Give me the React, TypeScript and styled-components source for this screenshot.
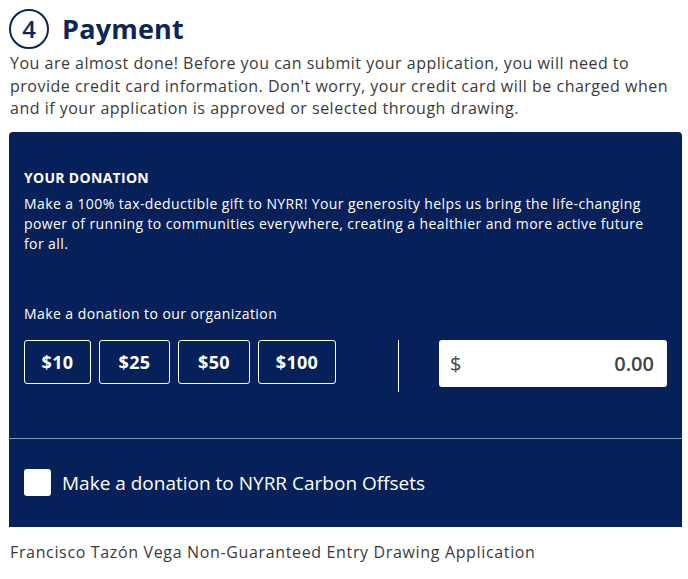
import { createGlobalStyle, styled } from 'styled-components';

const amounts = [
  { label: '$10', width: 67 },
  { label: '$25', width: 71 },
  { label: '$50', width: 72 },
  { label: '$100', width: 78 },
];

const GlobalStyle = createGlobalStyle`
  body {
    margin: 0;
    background: #ffffff;
    font-family: 'Open Sans', 'Liberation Sans', sans-serif;
  }
`;

const App = () => {
  return (
    <>
      <GlobalStyle />
      <StPage>
        <StHeader>
          <StStep>4</StStep>
          <StTitle>Payment</StTitle>
        </StHeader>
        <StIntro>
          You are almost done! Before you can submit your application, you will need to
          provide credit card information. Don't worry, your credit card will be charged when
          and if your application is approved or selected through drawing.
        </StIntro>

        <StPanel>
          <StDonation>
            <StLabel>YOUR DONATION</StLabel>
            <StDesc>
              Make a 100% tax-deductible gift to NYRR! Your generosity helps us bring the
              life-changing power of running to communities everywhere, creating a healthier
              and more active future for all.
            </StDesc>
            <StPrompt>Make a donation to our organization</StPrompt>
            <StAmountRow>
              <StAmounts>
                {amounts.map(({ label, width }) => (
                  <StAmountBtn key={label} type="button" $width={width}>
                    {label}
                  </StAmountBtn>
                ))}
              </StAmounts>
              <StDivider />
              <StInput>
                <span>$</span>
                <span>0.00</span>
              </StInput>
            </StAmountRow>
          </StDonation>
          <StOffset>
            <StCheck />
            <StOffsetText>Make a donation to NYRR Carbon Offsets</StOffsetText>
          </StOffset>
        </StPanel>

        <StFooter>Francisco Tazón Vega Non-Guaranteed Entry Drawing Application</StFooter>
      </StPage>
    </>
  );
};

export default App;

const StPage = styled.main`
  display: flex;
  flex-direction: column;
  padding: 8px 6px 0 9px;
`;

const StHeader = styled.div`
  display: flex;
  align-items: center;
  gap: 13px;
`;

const StStep = styled.div`
  display: flex;
  align-items: center;
  justify-content: center;

  width: 36px;
  height: 36px;

  border: 2.5px solid #0b2559;
  border-radius: 50%;
  color: #0b2559;
  font-size: 24px;
  font-weight: 600;
`;

const StTitle = styled.h1`
  margin: 0;

  color: #0b2559;
  font-size: 27px;
  font-weight: 700;
  line-height: 41px;
  letter-spacing: 0.2px;
`;

const StIntro = styled.p`
  margin: 3px 0 0 1px;

  color: #3a3a3a;
  font-size: 16px;
  line-height: 22.5px;
  letter-spacing: 0.5px;
`;

const StPanel = styled.section`
  margin-top: 12px;

  border-radius: 4px 4px 0 0;
  background: #06215a;
  color: #ffffff;
`;

const StDonation = styled.div`
  padding: 36px 15px 46px;

  border-bottom: 1px solid #8a97b3;
`;

const StLabel = styled.h2`
  margin: 0;

  font-size: 14px;
  font-weight: 700;
  line-height: 20px;
  letter-spacing: 0.3px;
`;

const StDesc = styled.p`
  margin: 6px 0 0;

  font-size: 14px;
  line-height: 20px;
  letter-spacing: 0.4px;
`;

const StPrompt = styled.p`
  margin: 50px 0 0;

  font-size: 14px;
  line-height: 20px;
  letter-spacing: 0.43px;
`;

const StAmountRow = styled.div`
  display: flex;
  align-items: flex-start;

  margin-top: 16px;
`;

const StAmounts = styled.div`
  display: flex;
  gap: 8px;
`;

const StAmountBtn = styled.button<{ $width: number }>`
  width: ${({ $width }) => $width}px;
  height: 44px;
  padding: 0;

  border: 1px solid #ffffff;
  border-radius: 3px;
  background: transparent;
  color: #ffffff;
  font-family: inherit;
  font-size: 18px;
  font-weight: 700;
  letter-spacing: 0.3px;
`;

const StDivider = styled.div`
  width: 1px;
  height: 52px;
  margin: 0 40px 0 62px;

  background: #ffffff;
`;

const StInput = styled.div`
  display: flex;
  align-items: center;
  justify-content: space-between;

  width: 228px;
  height: 47px;
  padding: 0 13px 0 11px;
  box-sizing: border-box;

  border-radius: 3px;
  background: #ffffff;
  color: #444444;
  font-size: 20px;

  & > span:last-child {
    font-weight: 600;
  }
`;

const StOffset = styled.div`
  display: flex;
  align-items: center;
  gap: 11px;

  height: 88px;
  padding: 0 15px;
`;

const StCheck = styled.div`
  width: 27px;
  height: 27px;

  border-radius: 3px;
  background: #ffffff;
`;

const StOffsetText = styled.span`
  font-size: 19px;
`;

const StFooter = styled.p`
  margin: 14px 0 0 1px;

  color: #3a3a3a;
  font-size: 16px;
  line-height: 22px;
  letter-spacing: 0.65px;
`;
